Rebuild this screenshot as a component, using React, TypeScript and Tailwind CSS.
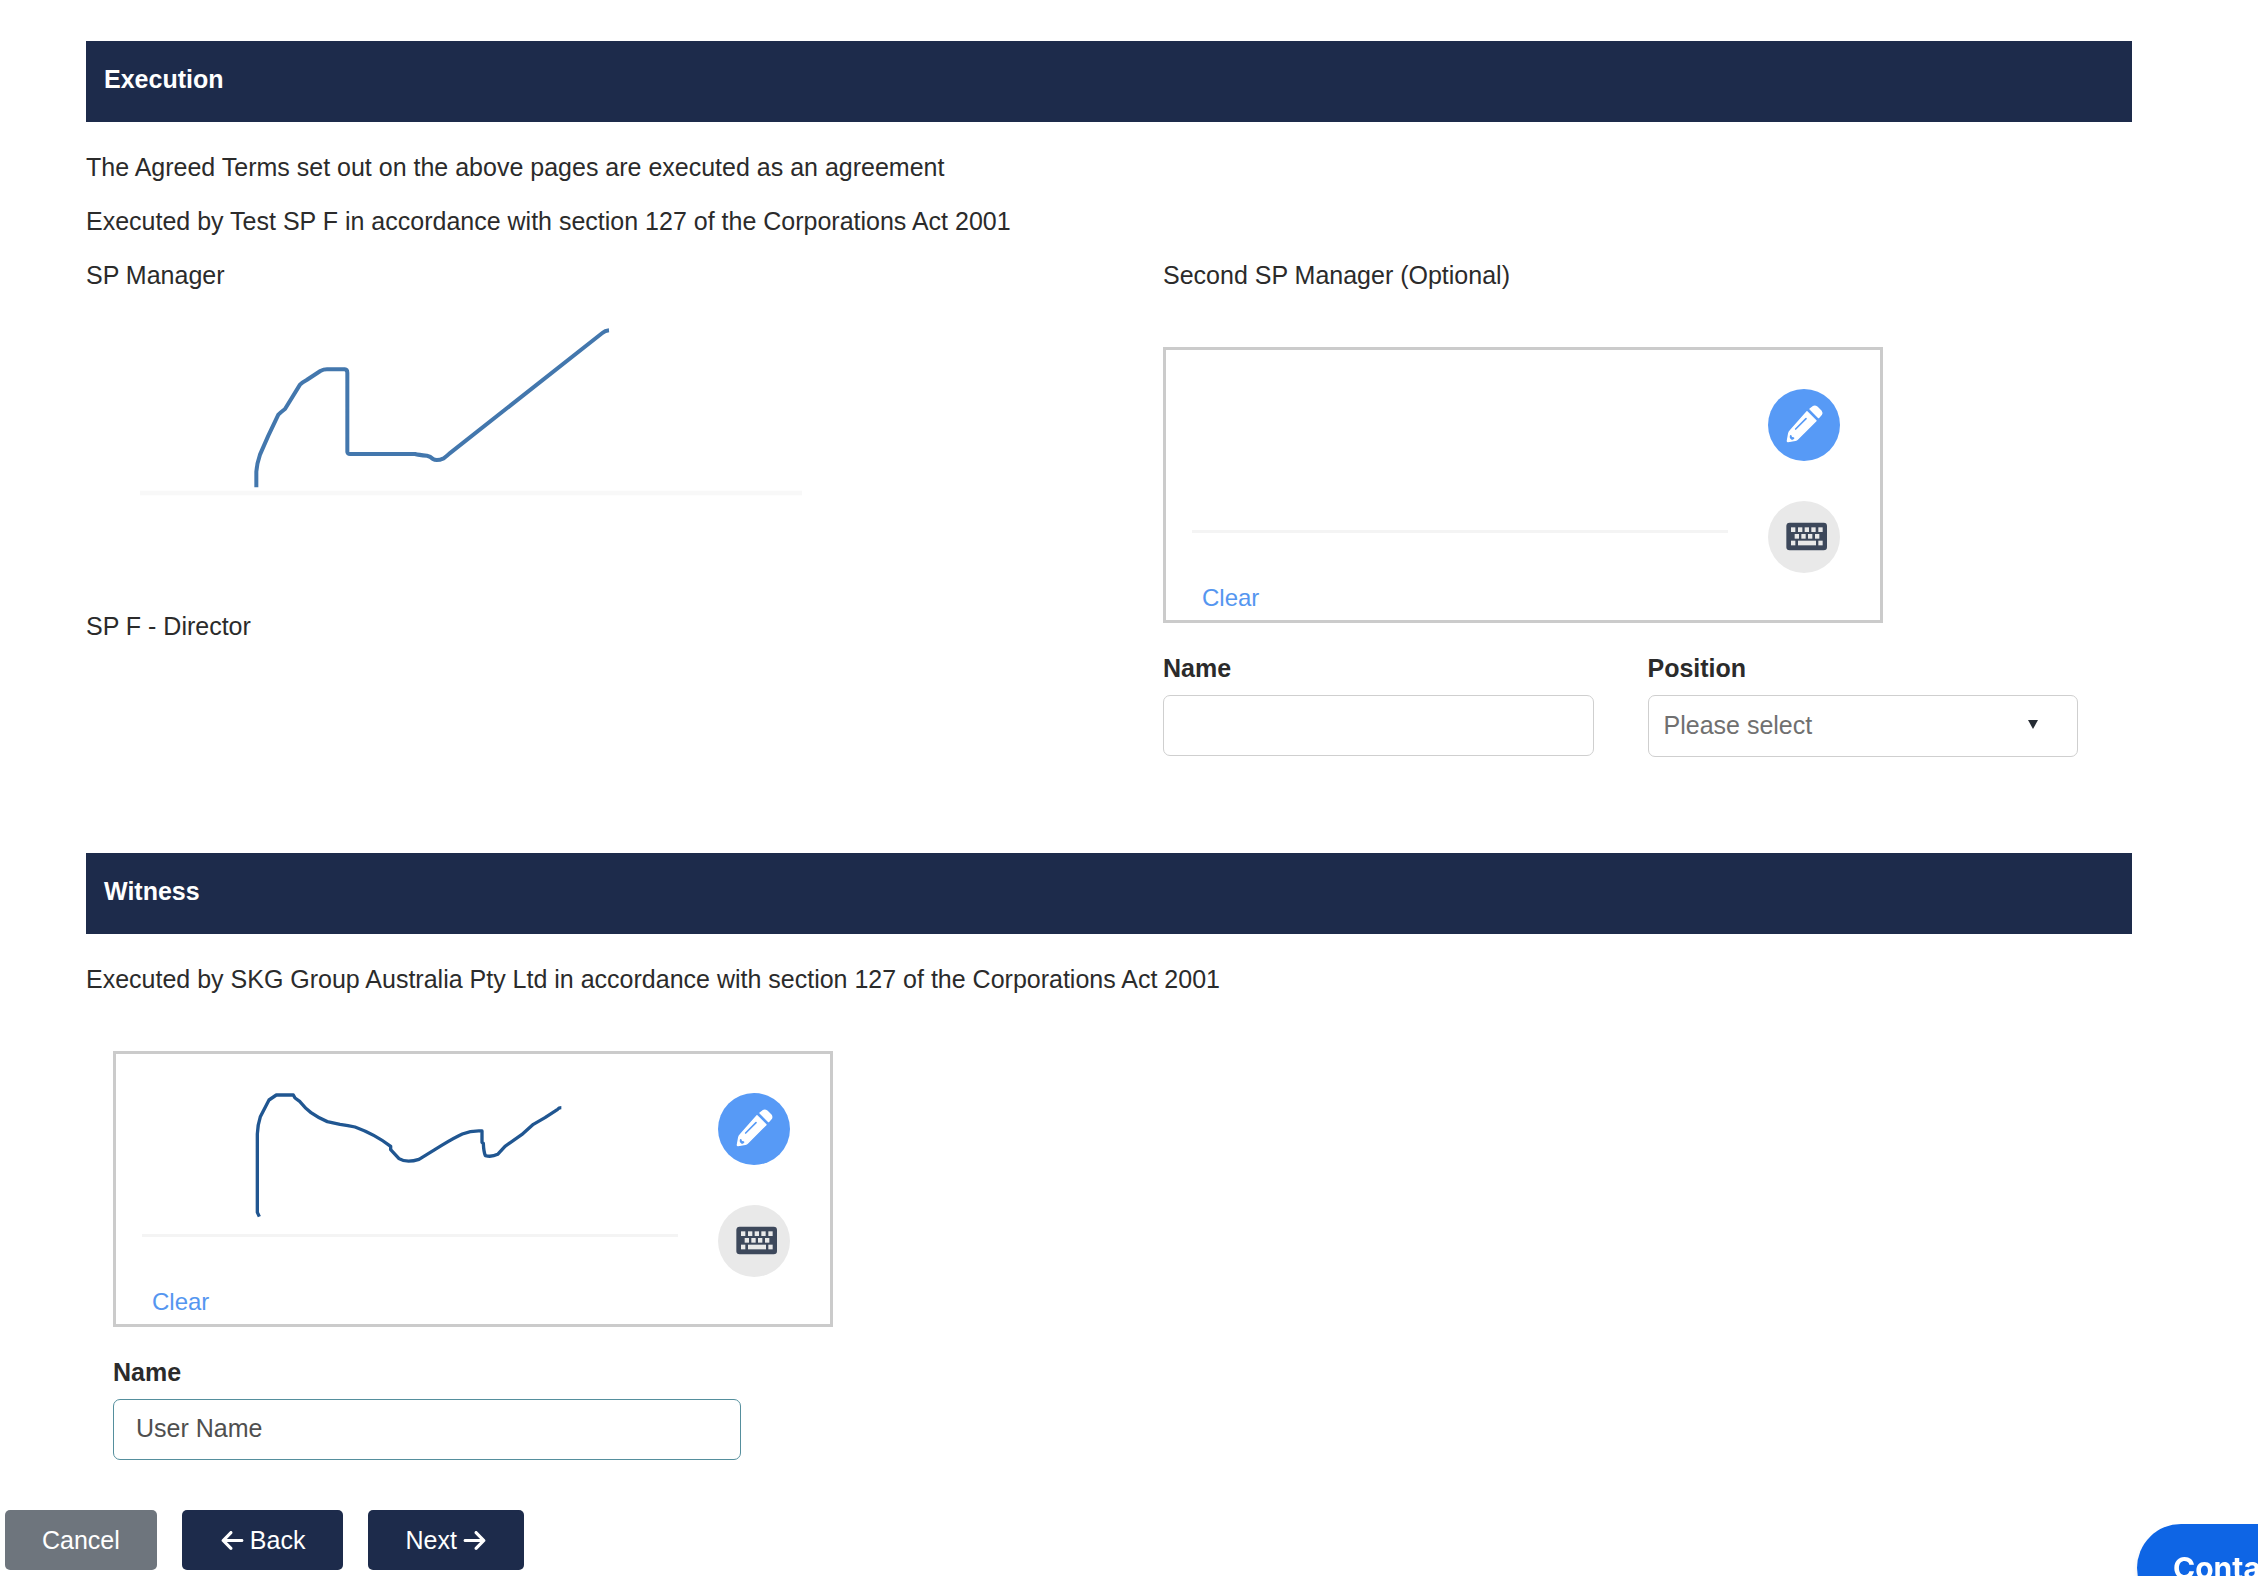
import { useState } from 'react';
import type { ReactNode } from 'react';
import { FaArrowLeft, FaArrowRight } from 'react-icons/fa6';

const positions = ['Director', 'Secretary', 'Sole Director'];

function SectionHeader({ title }: { title: string }) {
  return (
    <h2 className="h-[81px] bg-[#1d2b4b] px-[18px] pt-[19px] text-[25px] leading-[38px] font-bold text-white">
      {title}
    </h2>
  );
}

function PencilIcon() {
  return (
    <svg viewBox="0 0 216 216" className="size-full" aria-hidden="true">
      <g fill="#fff" stroke="#fff" strokeWidth="4" strokeLinejoin="round">
        <path d="M117 68L144 95L89 150Q86 153 82 154L60 158Q58 158 58 156L62 134Q63 129 66 126Z" />
        <path d="M126 60L135 53Q141 50 147 54L159 66Q163 71 160 77L152 86Z" />
      </g>
      <path d="M83 120L114 89" stroke="#579af6" strokeWidth="5" strokeLinecap="round" />
      <path d="M66 139Q70 136 71 141L72 144L77 145Q81 147 78 150L72 153Q66 150 65 145Z" fill="#579af6" />
    </svg>
  );
}

function KeyboardIcon() {
  return (
    <svg viewBox="0 0 216 216" className="size-full" aria-hidden="true">
      <rect x="55" y="65" width="122" height="83" rx="10" fill="#3d485b" />
      <g fill="#e9e9e9">
        {[69, 90, 110, 130, 151].map((x) => (
          <rect key={x} x={x} y="79" width="13" height="14" />
        ))}
        {[80, 100, 120, 141].map((x) => (
          <rect key={x} x={x} y="99" width="13" height="14" />
        ))}
        <rect x="69" y="119" width="13" height="14" />
        <rect x="90" y="119" width="54" height="14" />
        <rect x="151" y="119" width="13" height="14" />
      </g>
    </svg>
  );
}

// signature box with draw / type switch
function SignaturePad({ children }: { children?: ReactNode }) {
  const [signed, setSigned] = useState(true);

  return (
    <div className="flex h-[276px] w-[720px] max-w-full justify-between border-3 border-[#cbcbcb] pr-10 pl-[26px]">
      <div className="w-[536px]">
        <div className="h-[180px]">{signed && children}</div>
        <div className="h-[3px] bg-[#f4f4f4]" />
        <button
          type="button"
          onClick={() => setSigned(false)}
          className="mt-[47px] ml-[10px] block text-[24px] leading-[36px] text-[#5596f0]"
        >
          Clear
        </button>
      </div>
      <div className="flex flex-col gap-10 pt-[39px]">
        <button
          type="button"
          aria-label="Draw signature"
          className="size-[72px] rounded-full bg-[#579af6]"
        >
          <PencilIcon />
        </button>
        <button
          type="button"
          aria-label="Type signature"
          className="size-[72px] rounded-full bg-[#e9e9e9]"
        >
          <KeyboardIcon />
        </button>
      </div>
    </div>
  );
}

export default function App() {
  const [name, setName] = useState('');
  const [position, setPosition] = useState('');
  const [witness, setWitness] = useState('User Name');

  return (
    <div className="overflow-x-hidden bg-white pt-[41px] pb-1 font-['Liberation_Sans',Arial,sans-serif] text-[25px] leading-[38px] text-[#2b2b2b]">
      <main className="mr-[126px] ml-[86px]">
        <SectionHeader title="Execution" />
        <div className="mt-[26px] space-y-4">
          <p>The Agreed Terms set out on the above pages are executed as an agreement</p>
          <p>Executed by Test SP F in accordance with section 127 of the Corporations Act 2001</p>
        </div>

        <div className="-mr-[54px] mt-4 grid grid-cols-2 gap-x-[54px]">
          <div>
            <p>SP Manager</p>
            <svg
              viewBox="-318 0 1989 540"
              className="mt-[26px] ml-[53px] h-[180px] w-[663px]"
              role="img"
              aria-label="SP Manager signature"
            >
              <path d="M-315 519H1671" stroke="#f8f8f8" strokeWidth="13" />
              <path
                d="M34 502V455Q36 430 45 404L70 347L100 284Q108 276 120 267L165 194Q172 187 185 180L226 153Q236 148 246 148H299Q307 149 307 158V396Q308 402 315 402H510Q520 405 546 407Q556 409 564 417Q575 424 596 415Q606 408 613 401L1072 39Q1080 32 1092 31"
                fill="none"
                stroke="#4377ad"
                strokeWidth="12"
                strokeLinejoin="round"
              />
            </svg>
            <p className="mt-[107px]">SP F - Director</p>
          </div>

          <div>
            <p>Second SP Manager (Optional)</p>
            <div className="mt-[53px]">
              <SignaturePad />
            </div>
            <div className="mt-[26px] mr-[108px] grid grid-cols-2 gap-x-[54px]">
              <div>
                <label htmlFor="manager-name" className="block font-bold">Name</label>
                <input
                  id="manager-name"
                  type="text"
                  value={name}
                  onChange={(e) => setName(e.target.value)}
                  className="mt-2 block h-[61px] w-full rounded-[7px] border border-[#cfcfcf] px-[22px] text-[#555]"
                />
              </div>
              <div>
                <label htmlFor="manager-position" className="block font-bold">Position</label>
                <div className="relative mt-2">
                  <select
                    id="manager-position"
                    value={position}
                    onChange={(e) => setPosition(e.target.value)}
                    className="block h-[62px] w-full appearance-none rounded-[7px] border border-[#cfcfcf] px-[15px] pb-[2px] text-[#707070]"
                  >
                    <option value="">Please select</option>
                    {positions.map((p) => (
                      <option key={p} value={p}>{p}</option>
                    ))}
                  </select>
                  <svg viewBox="0 0 10 9" className="pointer-events-none absolute top-[25px] right-10 h-[9px] w-[10px]" aria-hidden="true">
                    <path d="M0 0H10L5 9Z" fill="#252b33" />
                  </svg>
                </div>
              </div>
            </div>
          </div>
        </div>

        <div className="mt-24">
          <SectionHeader title="Witness" />
        </div>
        <p className="mt-[26px]">
          Executed by SKG Group Australia Pty Ltd in accordance with section 127 of the Corporations Act 2001
        </p>
        <div className="mt-[53px] ml-[27px]">
          <SignaturePad>
            <svg viewBox="-309 -90 1608 540" className="h-[180px] w-[536px]" role="img" aria-label="Witness signature">
              <path
                d="M43 398L37 385V150Q38 122 46 98L72 48L94 33H145L150 42L165 53Q180 72 198 86Q222 103 247 113L285 121Q310 124 330 129Q390 151 437 187V197L462 224Q485 238 522 226L590 184Q630 160 652 150Q680 139 711 141V175L715 178Q716 203 721 215Q740 220 758 211L780 187L830 152L865 121L900 101L938 76Q942 71 949 71"
                fill="none"
                stroke="#205691"
                strokeWidth="10"
                strokeLinejoin="round"
              />
            </svg>
          </SignaturePad>
          <label htmlFor="witness-name" className="mt-[26px] block font-bold">Name</label>
          <input
            id="witness-name"
            type="text"
            value={witness}
            onChange={(e) => setWitness(e.target.value)}
            className="mt-2 block h-[61px] w-[628px] max-w-full rounded-[7px] border border-[#558f9d] px-[22px] pb-[2px] text-[#4f4f4f]"
          />
        </div>
      </main>

      <div className="mt-[50px] ml-[5px] flex gap-[25px] text-white">
        <button type="button" className="h-[60px] rounded-[5px] bg-[#6e757d] px-[37px]">
          Cancel
        </button>
        <button type="button" className="flex h-[60px] items-center gap-[5px] rounded-[5px] bg-[#1d2b4b] px-[38px]">
          <FaArrowLeft size={25} />
          Back
        </button>
        <button type="button" className="flex h-[60px] items-center gap-[5px] rounded-[5px] bg-[#1d2b4b] px-[37px]">
          Next
          <FaArrowRight size={25} />
        </button>
      </div>

      <button
        type="button"
        className="fixed -right-[60px] -bottom-[36px] h-[88px] w-[181px] rounded-full bg-[#0e65e5] pl-9 text-left font-['Inter',sans-serif] text-[30px] leading-[38px] font-bold text-white shadow-md"
      >
        Contact
      </button>
    </div>
  );
}
